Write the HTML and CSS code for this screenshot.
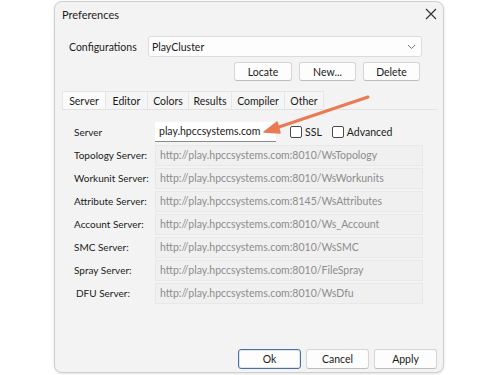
FILE: index.html
```html
<!DOCTYPE html>
<html>
<head>
<meta charset="utf-8">
<link rel="stylesheet" href="styles.css">
</head>
<body>
<div class="dialog">
  <div class="titlebar">
    <span class="title">Preferences</span>
    <svg class="close" width="12" height="12" viewBox="0 0 12 12"><path d="M1 1 L11 11 M11 1 L1 11" stroke="#333" stroke-width="1.2" fill="none"/></svg>
  </div>
  <div class="config-row">
    <span class="config-label">Configurations</span>
    <div class="combo">
      <span>PlayCluster</span>
      <svg width="9" height="6" viewBox="0 0 9 6"><path d="M1 1 L4.5 4.5 L8 1" stroke="#777" stroke-width="1" fill="none"/></svg>
    </div>
  </div>
  <div class="btn-row">
    <button class="btn">Locate</button>
    <button class="btn">New...</button>
    <button class="btn">Delete</button>
  </div>
  <div class="tabs">
    <div class="tab active t-server">Server</div>
    <div class="tab t-editor">Editor</div>
    <div class="tab t-colors">Colors</div>
    <div class="tab t-results">Results</div>
    <div class="tab t-compiler">Compiler</div>
    <div class="tab t-other">Other</div>
  </div>
  <div class="panel">
    <div class="row">
      <span class="lbl">Server</span>
      <div class="edit">play.hpccsystems.com</div>
      <span class="chk ssl"><span class="box"></span>SSL</span>
      <span class="chk"><span class="box"></span>Advanced</span>
    </div>
    <div class="row"><span class="lbl">Topology Server:</span><div class="dis">http://play.hpccsystems.com:8010/WsTopology</div></div>
    <div class="row"><span class="lbl">Workunit Server:</span><div class="dis">http://play.hpccsystems.com:8010/WsWorkunits</div></div>
    <div class="row"><span class="lbl">Attribute Server:</span><div class="dis">http://play.hpccsystems.com:8145/WsAttributes</div></div>
    <div class="row"><span class="lbl">Account Server:</span><div class="dis">http://play.hpccsystems.com:8010/Ws_Account</div></div>
    <div class="row"><span class="lbl">SMC Server:</span><div class="dis">http://play.hpccsystems.com:8010/WsSMC</div></div>
    <div class="row"><span class="lbl">Spray Server:</span><div class="dis">http://play.hpccsystems.com:8010/FileSpray</div></div>
    <div class="row"><span class="lbl dfu">DFU Server:</span><div class="dis">http://play.hpccsystems.com:8010/WsDfu</div></div>
  </div>
  <div class="footer">
    <button class="btn wide default">Ok</button>
    <button class="btn wide">Cancel</button>
    <button class="btn wide">Apply</button>
  </div>
  <svg class="arrow" width="500" height="375" viewBox="0 0 500 375">
    <path d="M368 97 L276 128" stroke="#ea7a52" stroke-width="3" stroke-linecap="round" fill="none"/>
    <path d="M264 132 L277 122 L280 133 Z" fill="#ea7a52" stroke="#ea7a52" stroke-width="1.5" stroke-linejoin="round"/>
  </svg>
</div>
</body>
</html>
```
FILE: styles.css
```css
html, body {
  margin: 0;
  padding: 0;
  background: #ffffff;
}
body {
  font-family: Lato, "Noto Sans", sans-serif;
  font-size: 10.5px;
  color: #1b1b1b;
  width: 500px;
  height: 375px;
  overflow: hidden;
  white-space: nowrap;
}
.dialog {
  margin: 1px 0 0 54px;
  width: 388px;
  height: 370px;
  border: 1px solid #cfcfcf;
  border-radius: 8px;
  background: #f3f3f3;
  display: flex;
  flex-direction: column;
  box-shadow: 0 1px 3px rgba(0,0,0,0.12);
}
.titlebar {
  height: 25px;
  display: flex;
  align-items: center;
  justify-content: space-between;
  padding: 0 6px 0 7px;
}
.title {
  font-size: 11px;
}
.close {
  margin-top: -1px;
}
.config-row {
  display: flex;
  align-items: center;
  margin: 9px 21px 0 14px;
}
.config-label {
  width: 79px;
}
.combo {
  flex: 1;
  height: 19px;
  background: #fdfdfd;
  border: 1px solid #dcdcdc;
  border-radius: 3px;
  display: flex;
  align-items: center;
  justify-content: space-between;
  padding: 0 5px 0 3px;
}
.btn-row {
  display: flex;
  justify-content: flex-end;
  gap: 7px;
  margin: 5px 23px 0 0;
}
.btn {
  font-family: inherit;
  font-size: 10.5px;
  color: #1b1b1b;
  width: 57px;
  height: 19px;
  padding: 0;
  background: #fdfdfd;
  border: 1px solid #d5d5d5;
  border-bottom-color: #bdbdbd;
  border-radius: 3px;
}
.btn-row .btn:first-child {
  width: 58px;
}
.tabs {
  display: flex;
  margin: 10px 6px 0 7px;
  border-bottom: 1px solid #e2e2e2;
}
.tab {
  height: 18px;
  line-height: 18px;
  text-align: center;
  background: #f5f5f5;
  border: 1px solid #e6e6e6;
  border-bottom: none;
  margin-right: -1px;
  box-sizing: border-box;
}
.tab.active {
  background: #fbfbfb;
}
.t-server { width: 44px; }
.t-editor { width: 43px; }
.t-colors { width: 42px; }
.t-results { width: 44px; }
.t-compiler { width: 54px; }
.t-other { width: 40px; }
.panel {
  margin: 0 6px 0 7px;
  padding: 12px 14px 0 12px;
  display: flex;
  flex-direction: column;
  gap: 3px;
}
.row {
  display: flex;
  align-items: center;
  height: 20px;
}
.lbl {
  width: 81px;
  flex: none;
  font-size: 10px;
}
.lbl.dfu {
  padding-left: 2px;
  width: 79px;
}
.edit {
  width: 117px;
  height: 19px;
  line-height: 19px;
  padding-left: 4px;
  background: #ffffff;
  border-bottom: 1px solid #8a8a8a;
  margin-right: 14px;
}
.chk {
  display: flex;
  align-items: center;
}
.chk.ssl {
  margin-right: 10px;
}
.box {
  width: 10px;
  height: 10px;
  border: 1px solid #4a4a4a;
  border-radius: 2px;
  background: #fff;
  margin-right: 3px;
}
.dis {
  flex: 1;
  height: 19px;
  line-height: 18px;
  padding-left: 4px;
  background: #f0f0f0;
  border: 1px solid #e8e8e8;
  color: #8d8d8d;
}
.footer {
  margin-top: auto;
  display: flex;
  justify-content: flex-end;
  gap: 5px;
  margin-right: 6px;
  margin-bottom: 3px;
}
.btn.wide {
  width: 63px;
  height: 20px;
}
.btn.default {
  border: 1px solid #4a6fa0;
  box-shadow: inset 0 0 0 1px #dce6f3;
}
.arrow {
  position: absolute;
  left: 0;
  top: 0;
  pointer-events: none;
}
```
